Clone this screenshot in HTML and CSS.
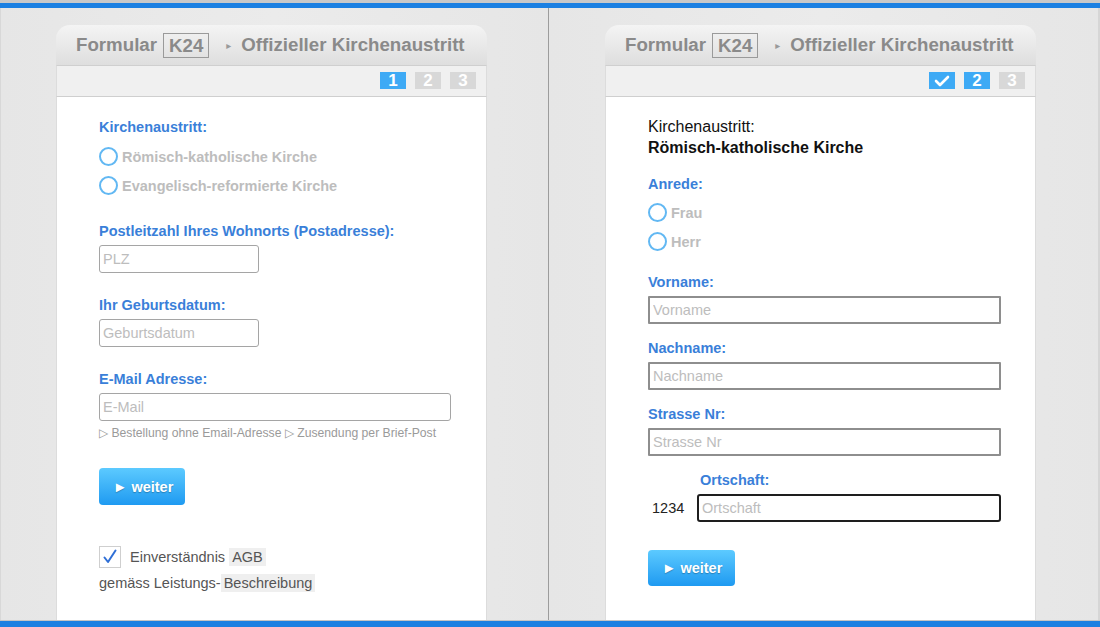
FILE: index.html
```html
<!DOCTYPE html>
<html lang="de">
<head>
<meta charset="utf-8">
<title>Formular K24 - Offizieller Kirchenaustritt</title>
<link rel="stylesheet" href="styles.css">
</head>
<body>
<div class="topbar"></div>
<div class="panels">
  <section class="panel panel-left">
    <div class="card">
      <div class="card-head">
        <span class="brand">Formular</span><span class="code">K24</span><span class="arrow">&#9656;</span><span class="title">Offizieller Kirchenaustritt</span>
      </div>
      <div class="steps">
        <span class="step active">1</span><span class="step">2</span><span class="step">3</span>
      </div>
      <div class="card-body body-left">
        <div class="field-label">Kirchenaustritt:</div>
        <div class="radio-list">
          <div class="radio-row"><span class="radio"></span><span class="radio-text">Römisch-katholische Kirche</span></div>
          <div class="radio-row"><span class="radio"></span><span class="radio-text">Evangelisch-reformierte Kirche</span></div>
        </div>

        <div class="group">
          <div class="field-label">Postleitzahl Ihres Wohnorts (Postadresse):</div>
          <input class="inp inp-short" type="text" placeholder="PLZ">
        </div>
        <div class="group">
          <div class="field-label">Ihr Geburtsdatum:</div>
          <input class="inp inp-short" type="text" placeholder="Geburtsdatum">
        </div>
        <div class="group">
          <div class="field-label">E-Mail Adresse:</div>
          <input class="inp inp-long" type="text" placeholder="E-Mail">
          <div class="note">&#9655; Bestellung ohne Email-Adresse &#9655; Zusendung per Brief-Post</div>
        </div>

        <button class="btn btn-left" type="button">&#9658; weiter</button>

        <div class="agree">
          <span class="checkbox">
            <svg width="16" height="16" viewBox="0 0 16 16"><path d="M2.5 8.5 L6 13 L13.5 1.5" fill="none" stroke="#2f6fd6" stroke-width="2" stroke-linecap="round" stroke-linejoin="round"/></svg>
          </span>
          <span class="agree-text">Einverständnis <span class="hl">AGB</span></span>
        </div>
        <div class="agree-line">gemäss Leistungs-<span class="hl">Beschreibung</span></div>
      </div>
    </div>
  </section>

  <section class="panel panel-right">
    <div class="card">
      <div class="card-head">
        <span class="brand">Formular</span><span class="code">K24</span><span class="arrow">&#9656;</span><span class="title">Offizieller Kirchenaustritt</span>
      </div>
      <div class="steps">
        <span class="step active step-check"><svg width="16" height="12" viewBox="0 0 16 12"><path d="M2 6 L6 10 L14 2" fill="none" stroke="#fff" stroke-width="2.6" stroke-linecap="round" stroke-linejoin="round"/></svg></span><span class="step active">2</span><span class="step">3</span>
      </div>
      <div class="card-body body-right">
        <div class="summary">Kirchenaustritt:</div>
        <div class="summary summary-strong">Römisch-katholische Kirche</div>

        <div class="group-r1">
          <div class="field-label">Anrede:</div>
          <div class="radio-row"><span class="radio"></span><span class="radio-text">Frau</span></div>
          <div class="radio-row"><span class="radio"></span><span class="radio-text">Herr</span></div>
        </div>

        <div class="group-r2">
          <div class="field-label">Vorname:</div>
          <input class="inp inp-right" type="text" placeholder="Vorname">
        </div>
        <div class="group-r3">
          <div class="field-label">Nachname:</div>
          <input class="inp inp-right" type="text" placeholder="Nachname">
        </div>
        <div class="group-r3">
          <div class="field-label">Strasse Nr:</div>
          <input class="inp inp-right" type="text" placeholder="Strasse Nr">
        </div>
        <div class="group-r3 ort-grid">
          <span></span>
          <div class="field-label ort-label">Ortschaft:</div>
          <span class="plz-val">1234</span>
          <input class="inp inp-ort" type="text" placeholder="Ortschaft">
        </div>

        <button class="btn btn-right" type="button">&#9658; weiter</button>
      </div>
    </div>
  </section>
</div>
<div class="bottombar"></div>
</body>
</html>
```

FILE: styles.css
```css
* { box-sizing: border-box; }

html, body {
  margin: 0;
  padding: 0;
}

body {
  width: 1100px;
  height: 627px;
  overflow: hidden;
  background: #e8e8e8;
  font-family: "Liberation Sans", Arial, sans-serif;
  font-size: 14.5px;
  color: #555;
}

.topbar {
  height: 8px;
  border-top: 3px solid #c9c9c9;
  background: #1b80e2;
}

.bottombar {
  height: 7px;
  border-top: 1px solid #c4c4c4;
  background: #1b80e2;
}

.panels {
  display: flex;
  height: 612px;
}

.panel {
  height: 100%;
  padding-top: 17px;
  padding-left: 56px;
  background: linear-gradient(to right, #e6e6e6, #ebebeb 50%, #e6e6e6);
}

.panel-left {
  width: 549px;
  border-right: 1px solid #9c9c9c;
  border-left: 1px solid #d8d8d8;
  padding-left: 55px;
}

.panel-right {
  flex: 1;
  border-right: 2px solid #d6d6d6;
}

.card {
  width: 431px;
  height: 100%;
  display: flex;
  flex-direction: column;
}

.card-head {
  height: 40px;
  border-radius: 14px 14px 0 0;
  background: linear-gradient(to bottom, #f4f4f4, #dedede);
  display: flex;
  align-items: center;
  padding-left: 20px;
  font-weight: bold;
  font-size: 18.7px;
  color: #8a8a8a;
  white-space: nowrap;
}

.code {
  margin-left: 6px;
  border: 1px solid #9a9a9a;
  padding: 1px 5px 1px 5px;
  line-height: 21px;
}

.arrow {
  font-size: 10px;
  color: #9a9a9a;
  margin: 0 10px 0 17px;
  font-family: "DejaVu Sans", sans-serif;
}

.steps {
  height: 32px;
  background: #f0f0f0;
  border-top: 1px solid #cfcfcf;
  border-bottom: 1px solid #cfcfcf;
  border-left: 1px solid #dcdcdc;
  border-right: 1px solid #dcdcdc;
  display: flex;
  justify-content: flex-end;
  align-items: flex-start;
  gap: 9px;
  padding: 6px 10px 0 0;
}

.step {
  width: 26px;
  height: 17px;
  background: #d8d8d8;
  color: #fff;
  font-weight: bold;
  font-size: 17px;
  line-height: 17px;
  text-align: center;
  display: flex;
  align-items: center;
  justify-content: center;
}

.step.active {
  background: #3eaaf5;
}

.card-body {
  flex: 1;
  background: #fff;
  border-left: 1px solid #dcdcdc;
  border-right: 1px solid #dcdcdc;
  padding-left: 42px;
}

.body-left {
  padding-top: 22px;
}

.field-label {
  font-weight: bold;
  color: #3a7fd9;
  line-height: 17px;
  margin-bottom: 5px;
}

.radio-list {
  padding-top: 1px;
}

.radio-row {
  height: 29px;
  display: flex;
  align-items: center;
}

.radio {
  width: 19px;
  height: 19px;
  border: 2px solid #62b8f3;
  border-radius: 50%;
  background: #fff;
  flex: none;
}

.radio-text {
  margin-left: 4px;
  font-weight: bold;
  color: #bdbdbd;
}

.group {
  margin-top: 23px;
}

.group + .group {
  margin-top: 24px;
}

.inp {
  display: block;
  height: 28px;
  border: 1.5px solid #a5a5a5;
  border-radius: 3px;
  padding: 0 3px;
  font-family: "Liberation Sans", Arial, sans-serif;
  font-size: 14.5px;
  color: #333;
  background: #fff;
  outline: none;
}

.inp::placeholder {
  color: #bdbdbd;
}

.inp-short { width: 160px; }
.inp-long { width: 352px; }

.note {
  margin-top: 5px;
  font-size: 12.2px;
  line-height: 14px;
  color: #9a9a9a;
}

.btn {
  display: block;
  height: 37px;
  border: none;
  border-radius: 4px;
  background: linear-gradient(to bottom, #5ccaff, #1f9af1);
  color: #fff;
  font-family: "Liberation Sans", Arial, sans-serif;
  font-weight: bold;
  font-size: 14.5px;
  padding: 0 0 0 14px;
  text-align: left;
  white-space: nowrap;
  text-shadow: 0 1px 1px rgba(0, 0, 0, 0.25);
}

.btn-left {
  margin-top: 28px;
  width: 86px;
}

.agree {
  margin-top: 41px;
  display: flex;
  align-items: center;
  height: 22px;
}

.checkbox {
  width: 22px;
  height: 22px;
  border: 1px solid #cfcfcf;
  background: #fff;
  display: flex;
  align-items: center;
  justify-content: center;
  flex: none;
}

.agree-text {
  margin-left: 9px;
  color: #555;
}

.hl {
  background: #efefef;
  padding: 1px 3px;
}

.agree-line {
  margin-top: 6px;
  line-height: 18px;
  color: #555;
}

/* right */
.body-right {
  padding-top: 19px;
}

.summary {
  font-size: 16px;
  line-height: 21px;
  color: #111;
}

.summary-strong {
  font-weight: bold;
}

.group-r1 {
  margin-top: 18px;
}

.group-r2 {
  margin-top: 18px;
}

.group-r3 {
  margin-top: 16px;
}

.inp-right {
  width: 353px;
  border: 2px solid #8e8e8e;
  border-radius: 1px;
}

.ort-grid {
  display: grid;
  grid-template-columns: 49px 304px;
  align-items: center;
}

.ort-label {
  padding-left: 3px;
}

.plz-val {
  padding-left: 4px;
  color: #222;
}

.inp-ort {
  width: 304px;
  border: 2px solid #1e1e1e;
  border-radius: 3px;
}

.btn-right {
  margin-top: 28px;
  width: 87px;
  height: 36px;
}
```
